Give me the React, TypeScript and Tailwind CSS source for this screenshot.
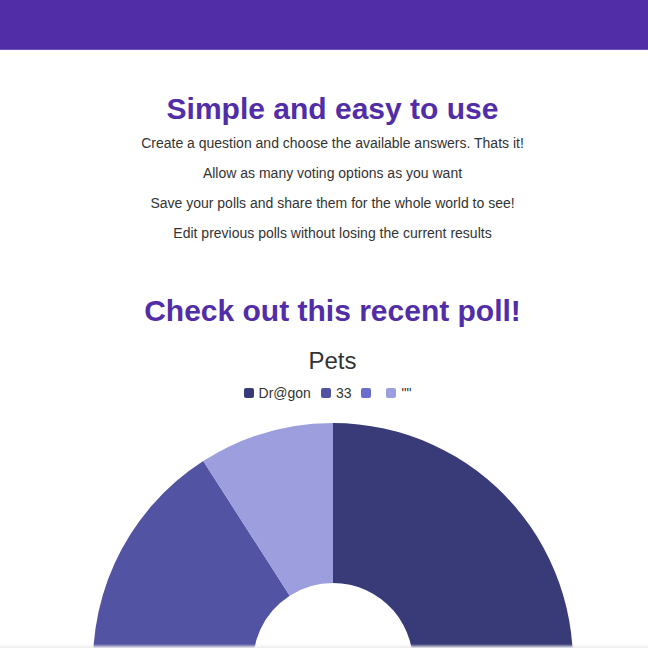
const features = [
  'Create a question and choose the available answers. Thats it!',
  'Allow as many voting options as you want',
  'Save your polls and share them for the whole world to see!',
  'Edit previous polls without losing the current results',
];

const poll = {
  title: 'Pets',
  options: [
    { label: 'Dr@gon', votes: 6, color: '#393b79' },
    { label: '33', votes: 4, color: '#5254a3' },
    { label: '', votes: 0, color: '#6b6ecf' },
    { label: '""', votes: 1, color: '#9c9ede' },
  ],
};

// doughnut slice path, angles in radians measured clockwise from top
function arc(cx: number, cy: number, r: number, ir: number, a0: number, a1: number) {
  const p = (rad: number, a: number) => [cx + rad * Math.sin(a), cy - rad * Math.cos(a)];
  const large = a1 - a0 > Math.PI ? 1 : 0;
  const [x0, y0] = p(r, a0);
  const [x1, y1] = p(r, a1);
  const [x2, y2] = p(ir, a1);
  const [x3, y3] = p(ir, a0);
  return `M${x0} ${y0} A${r} ${r} 0 ${large} 1 ${x1} ${y1} L${x2} ${y2} A${ir} ${ir} 0 ${large} 0 ${x3} ${y3} Z`;
}

const Doughnut = () => {
  const total = poll.options.reduce((s, o) => s + o.votes, 0);
  let start = 0;
  return (
    <svg width="480" height="480" viewBox="0 0 480 480" className="block">
      {poll.options.map((o) => {
        if (!o.votes) return null;
        const end = start + (o.votes / total) * Math.PI * 2;
        const d = arc(240, 240, 240, 80, start, end);
        start = end;
        return <path key={o.color} d={d} fill={o.color} />;
      })}
    </svg>
  );
};

export default function App() {
  return (
    <div className="min-h-screen bg-white font-['Liberation_Sans',Arial,sans-serif] text-[#333]">
      <header className="h-[50px] bg-[#512da8] border-b border-[#6e50b6]" />

      <main className="pl-[17px] flex flex-col items-center">
        <h1 className="mt-[40px] text-[30px] font-bold leading-[38px] text-[#512da8]">Simple and easy to use</h1>
        <div className="flex flex-col items-center">
          {features.map((f) => (
            <p key={f} className="text-[14px] leading-[30px]">{f}</p>
          ))}
        </div>

        <h2 className="mt-[44px] text-[30px] font-bold leading-[38px] text-[#512da8]">Check out this recent poll!</h2>
        <h3 className="mt-[16px] text-[24px] leading-[30px]">{poll.title}</h3>
        <div className="mt-[9px] flex items-center gap-[10px] text-[14px] -ml-[10px]">
          {poll.options.map((o) => (
            <div key={o.color} className="flex items-center gap-[5px]">
              <span className="w-[10px] h-[10px] rounded-[2px]" style={{ backgroundColor: o.color }} />
              <span className="leading-[16px]">{o.label}</span>
            </div>
          ))}
        </div>
        <div className="mt-[22px] ml-[1px]">
          <Doughnut />
        </div>
      </main>

      <div className="fixed bottom-0 left-0 right-0 h-[4px] bg-gradient-to-b from-transparent to-[#ececec]" />
    </div>
  );
}
